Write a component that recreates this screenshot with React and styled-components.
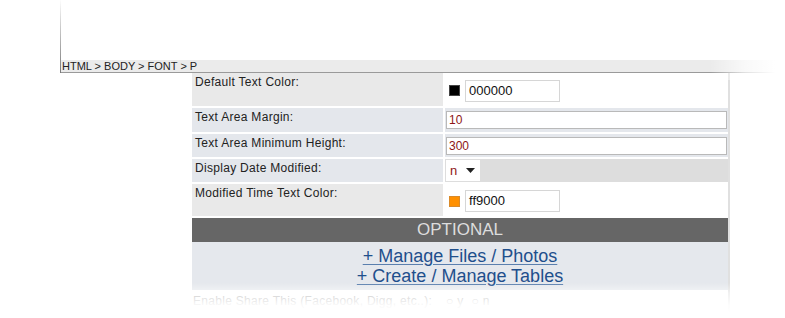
import React from "react";
import styled, { createGlobalStyle } from "styled-components";

const Global = createGlobalStyle`
  html, body { margin: 0; padding: 0; background: #fff; }
  body { font-family: "Liberation Sans", Arial, sans-serif; }
`;

const Page = styled.div`
  position: relative;
  width: 785px;
  height: 318px;
  overflow: hidden;
  background: #fff;
`;

const Editor = styled.div`
  margin-left: 60px;
  border-left: 1px solid;
  border-image: linear-gradient(to bottom, #ffffff 0px, #d8d8d8 20px, #7a7a7a 72px) 1;
  display: flex;
  flex-direction: column;
`;

const EditArea = styled.div`
  height: 60px;
  background: #fff;
`;

const StatusBar = styled.div`
  height: 12px;
  background: #ebebeb;
  border-bottom: 1px solid #9a9a9a;
  font-size: 11px;
  line-height: 13px;
  color: #222;
  padding-left: 1px;
  white-space: nowrap;
`;

const FormTable = styled.div`
  margin-left: 192px;
  width: 536px;
  border-right: 2px solid #e0e0e0;
  display: grid;
  grid-template-columns: 251px 283px;
  column-gap: 2px;
  row-gap: 2px;
  font-size: 12px;
  letter-spacing: 0.3px;
  color: #222;
`;

const Label = styled.div`
  height: ${(p) => p.$h}px;
  background: ${(p) => p.$bg};
  padding: 2px 0 0 3px;
  box-sizing: border-box;
  line-height: 14px;
`;

const Value = styled.div`
  height: ${(p) => p.$h}px;
  background: ${(p) => p.$bg};
  display: flex;
  align-items: center;
  padding-left: ${(p) => p.$pl || 1}px;
  padding-top: ${(p) => p.$pt || 0}px;
  box-sizing: border-box;
`;

const Swatch = styled.span`
  width: 11px;
  height: 11px;
  box-sizing: border-box;
  background: ${(p) => p.$color};
  border: 1px solid ${(p) => p.$border};
  margin-right: 5px;
  flex: none;
`;

const ColorInput = styled.div`
  width: 95px;
  height: 22px;
  box-sizing: border-box;
  border: 1px solid #d6d6d6;
  background: #fff;
  font-size: 13px;
  letter-spacing: 0;
  line-height: 20px;
  padding-left: 3px;
  color: #111;
`;

const TextInput = styled.div`
  width: 281px;
  height: 18px;
  box-sizing: border-box;
  border: 1px solid #b9b9b9;
  background: #fff;
  font-size: 12px;
  letter-spacing: 0;
  line-height: 16px;
  padding-left: 2px;
  color: #8e1616;
`;

const Select = styled.div`
  width: 34px;
  height: 21px;
  box-sizing: border-box;
  background: #fff;
  display: flex;
  align-items: center;
  padding-left: 4px;
  gap: 8px;
  font-size: 13px;
  color: #8e1616;
`;

const Optional = styled.div`
  grid-column: 1 / -1;
  display: flex;
  flex-direction: column;
`;

const OptionalHead = styled.div`
  height: 24px;
  background: #666666;
  color: #dddddd;
  font-size: 17px;
  letter-spacing: 0;
  line-height: 24px;
  text-align: center;
`;

const Links = styled.div`
  background: #e5e8ed;
  padding: 4px 0 4px;
  display: flex;
  flex-direction: column;
  align-items: center;
  height: 48px;
  box-sizing: border-box;
`;

const Link = styled.a`
  font-size: 18px;
  letter-spacing: 0;
  line-height: 20px;
  color: #1f4f8c;
  text-decoration: underline;
  text-decoration-color: #5a7fae;
  text-underline-offset: 2px;
`;

const ShareRow = styled.div`
  grid-column: 1 / -1;
  display: flex;
  height: 26px;
  background: #fff;
`;

const ShareLabel = styled.div`
  width: 253px;
  padding: 2px 0 0 1px;
  color: #999;
`;

const Radios = styled.div`
  display: flex;
  gap: 8px;
  color: #999;
  padding-top: 2px;
`;

const FadeBottom = styled.div`
  position: absolute;
  left: 0;
  right: 0;
  top: 283px;
  bottom: 0;
  background: linear-gradient(to bottom, rgba(255,255,255,0) 0px, rgba(255,255,255,0.55) 10px, rgba(255,255,255,0.93) 22px, #fff 30px);
  pointer-events: none;
`;

const FadeRight = styled.div`
  position: absolute;
  top: 55px;
  right: 0;
  width: 75px;
  height: 25px;
  background: linear-gradient(to right, rgba(255,255,255,0) 0px, rgba(255,255,255,0.7) 35px, #fff 65px);
  pointer-events: none;
`;

const Arrow = () => (
  <svg width="9" height="5" viewBox="0 0 9 5">
    <path d="M0 0 H9 L4.5 5 Z" fill="#222" />
  </svg>
);

export default function App() {
  return (
    <Page>
      <Global />
      <Editor>
        <EditArea />
        <StatusBar>HTML &gt; BODY &gt; FONT &gt; P</StatusBar>
      </Editor>
      <FormTable>
        <Label $h={33} $bg="#e9e9e9">Default Text Color:</Label>
        <Value $h={33} $bg="#ffffff" $pl={4} $pt={2}>
          <Swatch $color="#000" $border="#444" />
          <ColorInput>000000</ColorInput>
        </Value>

        <Label $h={24} $bg="#e4e7ec">Text Area Margin:</Label>
        <Value $h={24} $bg="#e4e7ec">
          <TextInput>10</TextInput>
        </Value>

        <Label $h={23} $bg="#e4e7ec">Text Area Minimum Height:</Label>
        <Value $h={23} $bg="#e4e7ec">
          <TextInput>300</TextInput>
        </Value>

        <Label $h={23} $bg="#e4e7ec">Display Date Modified:</Label>
        <Value $h={23} $bg="#dddddd">
          <Select>
            n <Arrow />
          </Select>
        </Value>

        <Label $h={32} $bg="#e9e9e9">Modified Time Text Color:</Label>
        <Value $h={32} $bg="#ffffff" $pl={4} $pt={2}>
          <Swatch $color="#ff9000" $border="#d98a2a" />
          <ColorInput>ff9000</ColorInput>
        </Value>

        <Optional>
          <OptionalHead>OPTIONAL</OptionalHead>
          <Links>
            <Link href="#">+ Manage Files / Photos</Link>
            <Link href="#">+ Create / Manage Tables</Link>
          </Links>
        </Optional>

        <ShareRow>
          <ShareLabel>Enable Share This (Facebook, Digg, etc..):</ShareLabel>
          <Radios>
            <span>○ y</span>
            <span>○ n</span>
          </Radios>
        </ShareRow>
      </FormTable>
      <FadeRight />
      <FadeBottom />
    </Page>
  );
}
